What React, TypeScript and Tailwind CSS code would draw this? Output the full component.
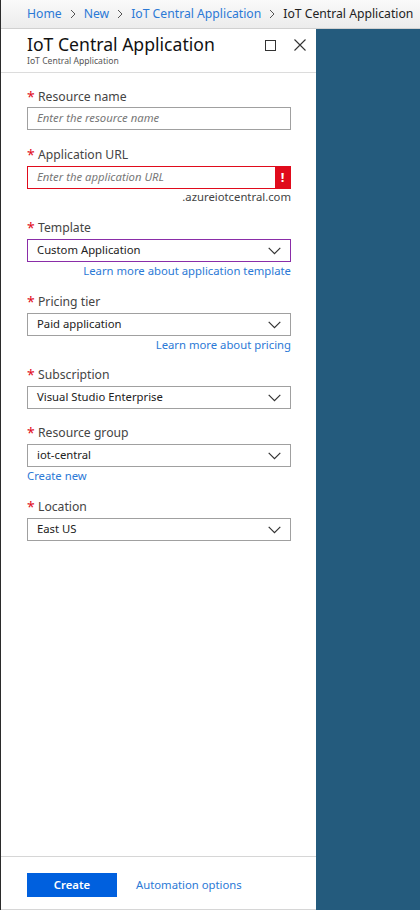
import React from "react";

const FONT = { fontFamily: '"Segoe UI", "Noto Sans", "Open Sans", sans-serif' };

function Chevron({ className = "" }: { className?: string }) {
  return (
    <svg width="13" height="8" viewBox="0 0 13 8" className={className} fill="none">
      <path d="M0.7 0.8 L6.5 6.6 L12.3 0.8" stroke="#333" strokeWidth="1.2" />
    </svg>
  );
}

function Crumb() {
  return (
    <svg width="6" height="10" viewBox="0 0 6 10" fill="none" className="mx-[8px]">
      <path d="M1 1 L5 5 L1 9" stroke="#555" strokeWidth="1" />
    </svg>
  );
}

function Label({ text }: { text: string }) {
  return (
    <div className="flex items-center h-[18px] text-[12.2px] leading-[18px] text-[#444]">
      <span className="text-[#e00b1c] w-[11px] text-[14px]">*</span>
      <span>{text}</span>
    </div>
  );
}

function Select({ value, purple = false }: { value: string; purple?: boolean }) {
  return (
    <div
      className={`mt-[2px] h-[23px] w-[264px] flex items-center justify-between pl-[9px] pr-[9px] border ${
        purple ? "border-[#8a2da8]" : "border-[#a0a0a0]"
      } bg-white text-[11.3px] text-[#222]`}
    >
      <span>{value}</span>
      <Chevron />
    </div>
  );
}

export default function App() {
  return (
    <div style={FONT} className="w-[420px] h-[910px] flex flex-col border-l border-[#2b2b2b] bg-white overflow-hidden">
      <div className="h-[29px] shrink-0 bg-gradient-to-b from-[#fafafa] to-[#ececec] border-b border-[#d0d0d0] flex items-center pl-[26px] text-[12.2px] whitespace-nowrap overflow-hidden">
        <span className="text-[#2b79d6]">Home</span>
        <Crumb />
        <span className="text-[#2b79d6]">New</span>
        <Crumb />
        <span className="text-[#2b79d6]">IoT Central Application</span>
        <Crumb />
        <span className="text-[#222]">IoT Central Application</span>
      </div>
      <div className="flex flex-1 min-h-0">
        <div className="w-[315px] shrink-0 flex flex-col bg-white border-b border-[#d6d6d6]">
          <div className="pt-[4px] pb-[5px] pl-[26px] pr-[10px] border-b border-[#dcdcdc] flex justify-between">
            <div>
              <div className="text-[17.6px] leading-[22px] text-[#111]">IoT Central Application</div>
              <div className="text-[8.6px] leading-[12px] text-[#555]">IoT Central Application</div>
            </div>
            <div className="flex items-start gap-[18px] pt-[6px]">
              <div className="w-[11px] h-[11px] border border-[#333] mt-[1px]" />
              <svg width="12" height="12" viewBox="0 0 12 12" fill="none">
                <path d="M0.5 0.5 L11.5 11.5 M11.5 0.5 L0.5 11.5" stroke="#333" strokeWidth="1.1" />
              </svg>
            </div>
          </div>
          <div className="flex-1 pl-[26px] pt-[15px]">
            <Label text="Resource name" />
            <div className="mt-[1px] h-[23px] w-[264px] border border-[#a0a0a0] flex items-center pl-[9px] text-[11.3px] italic text-[#777]">
              Enter the resource name
            </div>
            <div className="mt-[16px]">
              <Label text="Application URL" />
            </div>
            <div className="mt-[2px] h-[23px] w-[264px] border border-[#e00b1c] flex items-center justify-between text-[11.3px] italic text-[#777]">
              <span className="pl-[9px]">Enter the application URL</span>
              <div className="w-[15px] h-full bg-[#e00b1c] flex items-center justify-center text-white not-italic font-bold text-[13px]">!</div>
            </div>
            <div className="w-[264px] text-right text-[11.3px] leading-[16px] text-[#444]">.azureiotcentral.com</div>
            <div className="mt-[14px]">
              <Label text="Template" />
            </div>
            <Select value="Custom Application" purple />
            <div className="w-[264px] text-right text-[11.3px] leading-[16px] text-[#2b79d6] mt-[1px]">Learn more about application template</div>
            <div className="mt-[14px]">
              <Label text="Pricing tier" />
            </div>
            <Select value="Paid application" />
            <div className="w-[264px] text-right text-[11.3px] leading-[16px] text-[#2b79d6] mt-[1px]">Learn more about pricing</div>
            <div className="mt-[13px]">
              <Label text="Subscription" />
            </div>
            <Select value="Visual Studio Enterprise" />
            <div className="mt-[15px]">
              <Label text="Resource group" />
            </div>
            <Select value="iot-central" />
            <div className="text-[11.3px] leading-[16px] text-[#2b79d6] mt-[1px]">Create new</div>
            <div className="mt-[14px]">
              <Label text="Location" />
            </div>
            <Select value="East US" />
          </div>
          <div className="border-t border-[#d6d6d6] h-[53px] shrink-0 pl-[26px] pt-[16px] flex items-start">
            <div className="w-[90px] h-[24px] bg-[#0060de] text-white text-[11.3px] font-semibold flex items-center justify-center">Create</div>
            <div className="ml-[19px] h-[24px] flex items-center text-[11.3px] text-[#2b79d6]">Automation options</div>
          </div>
        </div>
        <div className="flex-1 bg-[#245b7d]" />
      </div>
    </div>
  );
}
